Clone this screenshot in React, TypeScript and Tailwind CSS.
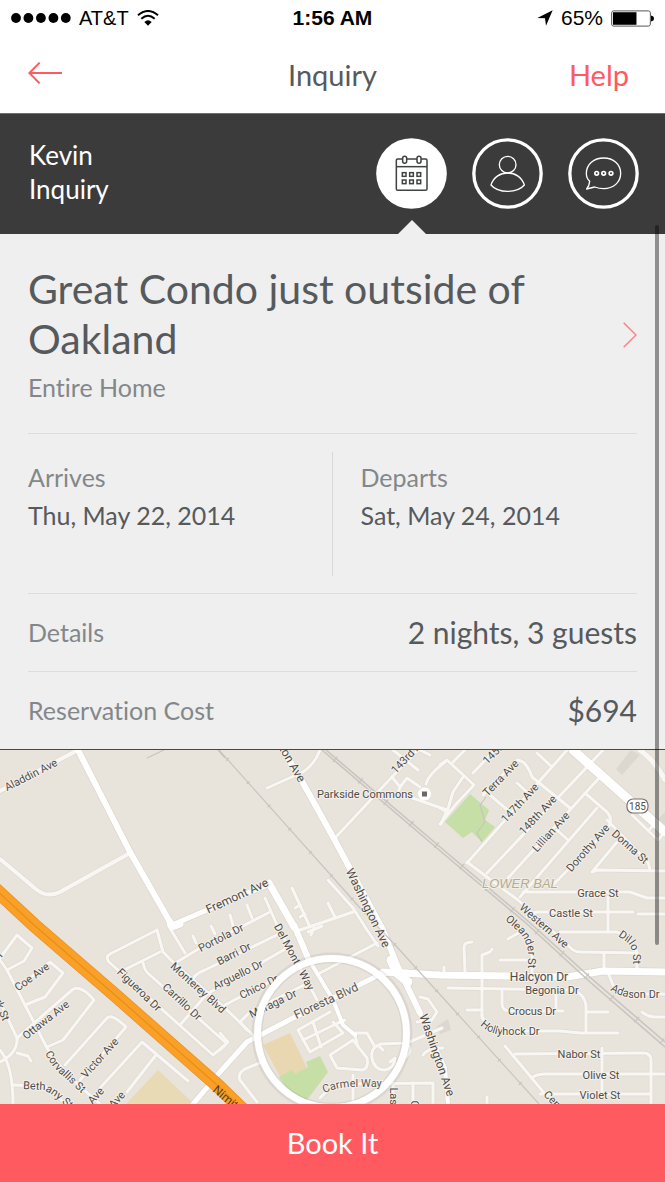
import React from "react";

type Street = { d: string; w?: number };

const streets: Street[] = [
  // north-west
  { d: "M0 791 L78 750", w: 4 },
  { d: "M0 859 L37 890 Q48 898 60 892 L130 853", w: 4 },
  // north centre
  { d: "M335 838 L392 777 L418 750" },
  { d: "M267 788 L303 772 Q315 764 320 750" },
  { d: "M392 777 L400 787 L407 778 L420 787" },
  { d: "M400 787 L398 793 L447 810 L441 824" },
  { d: "M426 784 Q428 775 445 762" },
  { d: "M393 750 L418 770" },
  { d: "M420 750 L430 755" },
  { d: "M440 765 L447 760 L474 785 L457 803 L440 824" },
  { d: "M463 777 L453 792 L447 812 L440 808" },
  { d: "M453 762 L465 750" },
  { d: "M473 773 L495 750" },
  { d: "M537 753 L552 767" },
  { d: "M467 863 L567 750" },
  { d: "M487 873 L603 750" },
  { d: "M483 795 L517 760 Q526 760 532 777 L570 808" },
  { d: "M490 795 L510 812" },
  { d: "M517 783 L527 792" },
  { d: "M508 878 L600 777" },
  { d: "M585 793 L607 812 Q614 820 607 830 L550 888" },
  { d: "M520 897 L597 808" },
  { d: "M557 830 L568 840" },
  { d: "M467 862 L518 900 L568 945 Q573 952 580 952 L637 953" },
  { d: "M523 892 L630 892 L647 898 L665 898" },
  { d: "M527 917 Q530 912 540 912 L633 912" },
  { d: "M638 914 L665 914" },
  { d: "M608 897 L608 932" },
  { d: "M560 932 L617 932 Q634 940 637 953 L637 968" },
  { d: "M604 953 L604 970" },
  { d: "M617 842 L592 872 L597 870 L665 871" },
  { d: "M607 820 L648 862 L650 870" },
  { d: "M640 750 Q656 762 665 780", w: 5 },
  { d: "M632 815 L658 840 L665 832" },
  { d: "M650 829 L656 822" },
  // east
  { d: "M444 967 L444 975" },
  { d: "M465 972 L464 947 Q464 942 472 942" },
  { d: "M482 1018 L482 955 L490 952 L492 949" },
  { d: "M500 960 L530 960" },
  { d: "M508 939 L520 932" },
  { d: "M532 950 L532 974" },
  { d: "M448 988 L573 990 Q584 994 586 1005 L586 1032" },
  { d: "M502 990 L502 1005 Q503 1011 510 1011 L563 1011" },
  { d: "M587 1012 L608 1012" },
  { d: "M467 1010 L482 1010" },
  { d: "M482 1015 Q486 1031 500 1031 L560 1031 L580 1033 L618 1033" },
  { d: "M556 992 L556 1010" },
  { d: "M505 1046 L540 1088 L553 1104" },
  { d: "M515 1054 L643 1053 Q651 1053 651 1060 L651 1104" },
  { d: "M533 1077 Q538 1074 545 1074 L665 1074" },
  { d: "M540 1094 L651 1094" },
  { d: "M602 1048 L602 1094" },
  { d: "M607 970 L613 985 Q617 993 627 994 L665 994" },
  { d: "M642 1012 Q648 1017 655 1017 L665 1017" },
  { d: "M487 1097 L487 1104" },
  // centre
  { d: "M177 962 L200 948 L270 912" },
  { d: "M190 985 Q193 974 205 970 L283 932" },
  { d: "M180 1025 L207 994 L287 948" },
  { d: "M225 1005 L240 997 L300 967" },
  { d: "M240 1022 L250 1012 L310 982" },
  { d: "M225 1008 L253 1035" },
  { d: "M240 1022 L247 1030" },
  { d: "M320 973 L377 943" },
  { d: "M328 880 L353 908 L367 930 L378 946" },
  { d: "M353 912 L300 930" },
  { d: "M328 903 L335 917" },
  { d: "M292 888 L310 927" },
  { d: "M295 908 L300 905 M300 917 L305 914" },
  { d: "M265 898 L277 925 L317 1000" },
  { d: "M247 905 L252 918" },
  { d: "M230 915 L234 929" },
  { d: "M308 932 L322 926 M311 935 L314 928" },
  { d: "M298 1030 L330 1012 M333 1022 L343 1033 L310 1052 L298 1030" },
  { d: "M313 1022 L321 1047" },
  { d: "M303 1040 L338 1023 L345 1020" },
  { d: "M330 1055 L353 1040 L367 1058 Q369 1069 362 1070 L337 1068 Z" },
  { d: "M355 1033 L367 1033 L375 1047" },
  { d: "M383 1050 L378 1045 Q370 1050 372 1058 Q374 1070 385 1070 Q395 1068 395 1058 L390 1062" },
  { d: "M355 1035 L358 1047" },
  { d: "M380 1044 L407 1043 L442 1028" },
  { d: "M407 1044 Q414 1050 405 1058" },
  { d: "M420 997 L428 999 L437 1012 L432 1020 L417 1022" },
  { d: "M423 1055 Q428 1047 443 1048" },
  { d: "M320 1098 Q330 1086 345 1084 L433 1083 L433 1104" },
  { d: "M393 1083 L393 1104" },
  { d: "M413 1083 L413 1104" },
  { d: "M353 1075 L353 1104" },
  { d: "M220 1033 L228 1042 L220 1050" },
  { d: "M262 1062 L245 1069 Q237 1074 240 1080 L257 1102" },
  // west
  { d: "M0 958 L17 935 L32 948 L24 961 L7 970" },
  { d: "M0 960 L7 970 L25 1005 L47 1048 Q60 1070 100 1104" },
  { d: "M20 986 L50 962 L63 973 L45 997 L25 1005" },
  { d: "M17 1038 L72 990 Q80 984 94 1000 L63 1040 L47 1047" },
  { d: "M65 1065 L107 1018 Q112 1013 126 1027 L80 1080" },
  { d: "M100 1088 L142 1042 L188 1081" },
  { d: "M127 1092 L156 1055" },
  { d: "M0 1002 L17 1038 Q18 1053 0 1062" },
  { d: "M17 1053 L28 1056 L31 1061" },
  { d: "M0 1050 Q13 1065 13 1104" },
  { d: "M13 1085 L45 1086 L66 1104" },
  { d: "M157 930 L110 954 Q105 957 109 962 L213 1055 L225 1045" },
  { d: "M157 930 L163 952 L173 962 L225 1008" },
  { d: "M120 972 L160 952" },
  { d: "M143 963 Q145 972 150 975 L225 1042" },
  { d: "M168 925 L185 953" },
  { d: "M193 936 L196 943 M211 926 L215 934" },
];

const avenues: Street[] = [
  { d: "M78 750 L130 852 L170 922", w: 6 },
  { d: "M172 925 L200 913 L270 884", w: 5 },
  { d: "M270 884 L295 928 L308 958 L333 1000 L343 1025 L355 1035", w: 4 },
  { d: "M269 883 L294 927", w: 7 },
  { d: "M294 925 L308 958", w: 6 },
  { d: "M283 750 L303 783 L333 837 L383 930 L397 965 L420 1013", w: 6 },
  { d: "M420 1013 L445 1068 L448 1104", w: 4 },
  { d: "M193 1104 L220 1072 L247 1042 L293 1018 L373 978 Q382 972 407 972", w: 5 },
  { d: "M383 972 L440 975 L567 977 L603 971 L665 972", w: 7 },
  { d: "M391 960 L397 973 L408 982", w: 9 },
  { d: "M573 750 L665 832", w: 9 },
  { d: "M170 922 L172 927 L180 924", w: 7 },
];

type LabelProps = { x: number; y: number; r?: number; size?: number; children: string };

function MapLabel({ x, y, r = 0, size = 11, children }: LabelProps) {
  return (
    <text
      x={x}
      y={y}
      fontSize={size}
      textAnchor="middle"
      dominantBaseline="central"
      transform={r ? `rotate(${r} ${x} ${y})` : undefined}
    >
      {children}
    </text>
  );
}

function CurvedLabel({ id, d, children }: { id: string; d: string; children: string }) {
  return (
    <>
      <path id={id} d={d} fill="none" stroke="none" />
      <text fontSize={11}>
        <textPath href={`#${id}`}>{children}</textPath>
      </text>
    </>
  );
}

function LocationMap() {
  return (
    <svg
      role="img"
      aria-label="Map of the listing's neighbourhood"
      viewBox="0 750 665 354"
      preserveAspectRatio="xMidYMid slice"
      className="block h-[354px] w-full bg-[#e8e4dc]"
    >
      <path d="M445 822 L470 794 L489 810 L485 820 L495 827 L482 842 L472 832 L463 838Z" fill="#c5dfa6" />
      <path d="M482 842 L477 833 L485 822 L480 805 L486 797" fill="none" stroke="#c9c5bd" strokeWidth="1.2" />
      <path d="M158 1070 L194 1104 L126 1104Z" fill="#e8dab5" />
      <path d="M263 1045 L290 1033 L308 1070 L295 1075 L280 1077Z" fill="#e8d7b1" />
      <path d="M279 1077 L292 1070 L295 1074 L308 1067 L306 1062 L320 1056 L328 1072 L307 1100 L293 1098Z" fill="#c5dfa6" />
      <path d="M616 769 L631 750 L640 755 L622 775Z M655 822 L665 812 V825Z M436 1027 L448 1019 L451 1030 L440 1034Z" fill="#dcd8d0" />

      <g fill="none" strokeLinecap="round" strokeLinejoin="round">
        {streets.map((s) => (
          <path key={`edge-${s.d}`} d={s.d} stroke="#dfdad2" strokeWidth={(s.w ?? 3) + 1.4} />
        ))}
        {avenues.map((s) => (
          <path key={`edge-${s.d}`} d={s.d} stroke="#dcd7ce" strokeWidth={(s.w ?? 5) + 1.4} />
        ))}
        {streets.map((s) => (
          <path key={s.d} d={s.d} stroke="#f9f7f3" strokeWidth={s.w ?? 3} />
        ))}
        {avenues.map((s) => (
          <path key={s.d} d={s.d} stroke="#ffffff" strokeWidth={s.w ?? 5} />
        ))}
      </g>

      {/* railways */}
      <g fill="none" stroke="#c8c5c0">
        <path d="M219 750 L337 882 L360 908 L397 947 L445 1000 L539 1104" strokeWidth="1.2" />
        <path d="M219 750 L337 882 L360 908 L397 947 L445 1000 L539 1104" strokeWidth="4" strokeDasharray="1.2 30" strokeDashoffset="-12" />
        <path d="M322 750 L445 855 L527 924 L590 982 L665 1047" strokeWidth="1.6" />
        <path d="M326 750 L446 852 L529 922 L592 979 L665 1042" strokeWidth="1.6" />
        <path d="M324 750 L446 853 L528 923 L591 980 L665 1044" strokeWidth="7" strokeDasharray="1.2 32" strokeDashoffset="-14" />
        <path d="M147 758 L164 750 M218 750 L225 758" strokeWidth="1.2" />
      </g>

      {/* freeway */}
      <path d="M-6 888 L34 925 L115 995 L217 1085 L242 1109" fill="none" stroke="#e8912a" strokeWidth="14" />
      <path d="M-6 888 L34 925 L115 995 L217 1085 L242 1109" fill="none" stroke="#fba026" strokeWidth="12.5" />
      <path d="M-6 888 L34 925 L115 995 L217 1085 L242 1109" fill="none" stroke="#e58f1b" strokeWidth="1.2" />

      <g
        fontFamily="Roboto, 'Liberation Sans', sans-serif"
        fill="#4f4c49"
        stroke="#f4f1eb"
        strokeWidth="2"
        strokeLinejoin="round"
        paintOrder="stroke"
      >
        <MapLabel x={31} y={775} r={-27}>Aladdin Ave</MapLabel>
        <MapLabel x={237} y={896} r={-25} size={12}>Fremont Ave</MapLabel>
        <MapLabel x={289} y={758} r={60} size={12}>ngton Ave</MapLabel>
        <MapLabel x={368} y={908} r={64} size={12}>Washington Ave</MapLabel>
        <MapLabel x={437} y={1055} r={71} size={12}>Washington Ave</MapLabel>
        <MapLabel x={365} y={794}>Parkside Commons</MapLabel>
        <MapLabel x={410} y={754} r={-47}>143rd Ave</MapLabel>
        <MapLabel x={502} y={745} r={-45}>145th Ave</MapLabel>
        <MapLabel x={501} y={778} r={-46}>Terra Ave</MapLabel>
        <MapLabel x={520} y={803} r={-47}>147th Ave</MapLabel>
        <MapLabel x={538} y={815} r={-47}>148th Ave</MapLabel>
        <MapLabel x={551} y={832} r={-48}>Lillian Ave</MapLabel>
        <MapLabel x={588} y={848} r={-49}>Dorothy Ave</MapLabel>
        <MapLabel x={630} y={847} r={42}>Donna St</MapLabel>
        <MapLabel x={598} y={893}>Grace St</MapLabel>
        <MapLabel x={571} y={913}>Castle St</MapLabel>
        <MapLabel x={544} y={926} r={41}>Western Ave</MapLabel>
        <CurvedLabel id="oleander" d="M505 920 L518 931 Q527 941 528 952 L528 975">Oleander St</CurvedLabel>
        <CurvedLabel id="dillo" d="M618 936 L628 943 Q633 949 633 958 L633 975">Dillo St</CurvedLabel>
        <MapLabel x={539} y={977} size={12}>Halcyon Dr</MapLabel>
        <MapLabel x={552} y={990}>Begonia Dr</MapLabel>
        <MapLabel x={532} y={1011}>Crocus Dr</MapLabel>
        <CurvedLabel id="hollyhock" d="M480 1025 Q489 1034 503 1035 L560 1035">Hollyhock Dr</CurvedLabel>
        <CurvedLabel id="adason" d="M610 990 Q621 997 633 998 L680 998">Adason Dr</CurvedLabel>
        <MapLabel x={579} y={1054}>Nabor St</MapLabel>
        <MapLabel x={601} y={1075}>Olive St</MapLabel>
        <MapLabel x={600} y={1095}>Violet St</MapLabel>
        <CurvedLabel id="central" d="M543 1095 L590 1145">Central Ave</CurvedLabel>
        <MapLabel x={221} y={938} r={-27}>Portola Dr</MapLabel>
        <MapLabel x={234} y={954} r={-27}>Barri Dr</MapLabel>
        <MapLabel x={238} y={975} r={-26}>Arguello Dr</MapLabel>
        <MapLabel x={259} y={987} r={-26}>Chico Dr</MapLabel>
        <MapLabel x={273} y={1004} r={-26}>Moraga Dr</MapLabel>
        <MapLabel x={294} y={957} r={62}>Del Monte Way</MapLabel>
        <MapLabel x={198} y={988} r={42}>Monterey Blvd</MapLabel>
        <MapLabel x={182} y={1002} r={43}>Carrillo Dr</MapLabel>
        <MapLabel x={139} y={990} r={44}>Figueroa Dr</MapLabel>
        <MapLabel x={32} y={977} r={-36}>Coe Ave</MapLabel>
        <MapLabel x={46} y={1020} r={-38}>Ottawa Ave</MapLabel>
        <MapLabel x={100} y={1058} r={-48}>Victor Ave</MapLabel>
        <MapLabel x={93} y={1099} r={-48}>n Ave</MapLabel>
        <MapLabel x={114} y={1103} r={-48}>d Ave</MapLabel>
        <MapLabel x={2} y={1010} r={68}>rk St</MapLabel>
        <MapLabel x={0} y={954} r={-50}>r</MapLabel>
        <CurvedLabel id="corvallis" d="M45 1053 Q52 1068 63 1076 L95 1106">Corvallis St</CurvedLabel>
        <CurvedLabel id="bethany" d="M23 1089 L43 1090 Q54 1094 72 1112">Bethany St</CurvedLabel>
        <MapLabel x={393} y={1116} r={90}>Las Palmas</MapLabel>
        <MapLabel x={414} y={1107} r={90}>Ca</MapLabel>
      </g>

      {/* approximate location */}
      <circle cx="332" cy="1033" r="75" fill="none" stroke="#000" strokeOpacity="0.06" strokeWidth="11" />
      <circle cx="332" cy="1033" r="74.5" fill="none" stroke="#fff" strokeWidth="7" />

      <g fontFamily="Roboto, sans-serif" fill="#5c5956" stroke="#f4f1eb" strokeWidth="2" paintOrder="stroke">
        <MapLabel x={326} y={1001} r={-25} size={12}>Floresta Blvd</MapLabel>
        <CurvedLabel id="carmel" d="M324 1093 Q338 1087 353 1087 L390 1087">Carmel Way</CurvedLabel>
      </g>
      <text x="212" y="1091" fontSize="12" fontFamily="Roboto, sans-serif" fill="#5d3d17" transform="rotate(40 212 1091)">
        Nimitz Fwy
      </text>
      <text
        x="482"
        y="888"
        fontSize="13"
        fontStyle="italic"
        fontWeight="500"
        fontFamily="'Liberation Sans', sans-serif"
        fill="#b5ab93"
        stroke="#f1eee6"
        strokeWidth="2"
        paintOrder="stroke"
      >
        LOWER BAL
      </text>
      <circle cx="424.500" cy="794" r="6.500" fill="#fff" />
      <rect x="422" y="791.500" width="5" height="5" fill="#6b6866" />
      <rect x="627" y="799" width="21" height="14" rx="6" fill="#fff" stroke="#77736f" strokeWidth="1.2" />
      <text x="637.500" y="810" fontSize="10" textAnchor="middle" fontFamily="Roboto, sans-serif" fill="#4f4c49">
        185
      </text>
    </svg>
  );
}

function StatusBar() {
  return (
    <div className="grid h-9 grid-cols-3 items-center bg-white px-[11px] font-['Liberation_Sans',sans-serif] text-xl leading-6 text-black">
      <div className="flex items-center gap-2">
        <svg viewBox="0 0 60 10" className="h-[10px] w-[60px]" aria-hidden="true">
          {[5, 17.4, 29.9, 42.4, 54.8].map((cx) => (
            <circle key={cx} cx={cx} cy="5" r="4.900" />
          ))}
        </svg>
        <span>AT&amp;T</span>
        <svg viewBox="0 0 66 48" className="h-4 w-[22px]" aria-hidden="true" fill="none" stroke="#000" strokeWidth="6">
          <path d="M3 16 Q33 -10 63 16" />
          <path d="M13 26 Q33 9 53 26" />
          <path d="M22 36 Q33 26 44 36 L33 47Z" fill="#000" stroke="none" />
        </svg>
      </div>
      <div className="text-center text-[21px] font-bold">1:56 AM</div>
      <div className="flex items-center justify-end gap-2">
        <svg viewBox="0 0 48 48" className="size-4" aria-hidden="true">
          <path d="M47 1 L1 24 L24 25 L27 47Z" />
        </svg>
        <span className="text-[21px]">65%</span>
        <svg viewBox="0 0 130 50" className="h-[17px] w-[43px]" aria-hidden="true">
          <rect x="2" y="2" width="117" height="46" rx="6" fill="none" stroke="#555" strokeWidth="3" />
          <rect x="6" y="6" width="71" height="38" fill="#000" />
          <path d="M121 16 Q130 18 130 25 Q130 32 121 34Z" fill="#000" />
        </svg>
      </div>
    </div>
  );
}

const ring = <circle cx="106.500" cy="106.500" r="101" fill="none" stroke="#fff" strokeWidth="10" />;

function HostBar() {
  return (
    <section className="flex items-center justify-between border-t border-[#6d716f] bg-[#3b3b3b] pl-[29px] pr-[26px] pt-6 pb-[25px]">
      <p className="pb-[3px] text-[26px] leading-[34px] text-white">
        Kevin
        <br />
        Inquiry
      </p>
      <nav className="flex gap-[25px]" aria-label="Inquiry sections">
        <button type="button" aria-label="Dates" className="relative size-[71px]">
          <svg viewBox="0 0 213 213" className="size-full" fill="none" stroke="#3f4142" strokeWidth="4.500">
            <circle cx="106.500" cy="106.500" r="106" fill="#fff" stroke="none" />
            <rect x="61" y="63" width="92" height="94" rx="4" />
            <path d="M61 86 H153" />
            <rect x="80" y="55" width="12" height="21" rx="6" fill="#fff" />
            <rect x="123" y="55" width="12" height="21" rx="6" fill="#fff" />
            {[79, 101, 123].map((x) => (
              <g key={x}>
                <rect x={x} y="104" width="11" height="11" />
                <rect x={x} y="126" width="11" height="11" />
              </g>
            ))}
          </svg>
          <svg viewBox="0 0 30 15" className="absolute left-1/2 top-[82px] h-[15px] w-[30px] -translate-x-1/2" aria-hidden="true">
            <path d="M15 0 L30 15 H0Z" fill="#efefef" />
          </svg>
        </button>
        <button type="button" aria-label="Guest" className="size-[71px]">
          <svg viewBox="0 0 213 213" className="size-full" fill="none" stroke="#fff" strokeWidth="4">
            {ring}
            <circle cx="107" cy="80" r="25" />
            <path d="M57 141 C64 118 84 105 107 105 C130 105 150 118 157 141 C147 153 128 160 107 160 C86 160 67 153 57 141Z" />
          </svg>
        </button>
        <button type="button" aria-label="Messages" className="size-[71px]">
          <svg viewBox="0 0 213 213" className="size-full" fill="none" stroke="#fff" strokeWidth="4" strokeLinejoin="round">
            {ring}
            <path d="M65 130 C58 124 55 116 55 106 C55 79 78 60 107 60 C136 60 158 79 158 106 C158 133 136 152 107 152 C97 152 88 150 80 147 L56 153 Q64 143 65 130 Z" />
            <circle cx="86" cy="106" r="5.500" strokeWidth="5" />
            <circle cx="107" cy="106" r="5.500" strokeWidth="5" />
            <circle cx="129" cy="106" r="5.500" strokeWidth="5" />
          </svg>
        </button>
      </nav>
    </section>
  );
}

export default function App() {
  return (
    <div className="relative flex min-h-screen flex-col bg-[#efefef] font-[Lato,'Liberation_Sans',sans-serif] text-[#565a5c] [font-variant-ligatures:none]">
      <StatusBar />
      <header className="grid h-[77px] grid-cols-3 items-center bg-white px-7">
        <button type="button" aria-label="Back" className="mb-1 justify-self-start">
          <svg viewBox="0 0 102 66" className="h-[22px] w-[34px]" fill="none" stroke="#ff5a5f" strokeWidth="6">
            <path d="M102 33 H4 M35 2 L4 33 L35 64" />
          </svg>
        </button>
        <h1 className="text-center text-[29px] leading-8">Inquiry</h1>
        <a href="#help" className="justify-self-end pr-2 text-[29px] leading-8 text-[#ff5a5f]">
          Help
        </a>
      </header>
      <HostBar />

      <main className="flex flex-col">
        <div className="px-7">
          <a href="#listing" className="flex items-center justify-between border-b border-[#dcdddd] pt-[30px] pb-7">
            <div>
              <h2 className="max-w-[530px] text-[41px] leading-[50px]">Great Condo just outside of Oakland</h2>
              <p className="mt-[5px] text-[25px] leading-9 text-[#82888a]">Entire Home</p>
            </div>
            <svg viewBox="0 0 42 78" className="h-[26px] w-[14px]" fill="none" stroke="#ff7b7f" strokeWidth="4" aria-hidden="true">
              <path d="M2 2 L39 39 L2 76" />
            </svg>
          </a>
          <dl>
            <div className="grid grid-cols-2 border-b border-[#dcdddd] pt-[18px] pb-[17px]">
              <div className="h-[124px] border-r border-[#d6d7d7] pt-[7px]">
                <dt className="text-[25px] leading-9 text-[#82888a]">Arrives</dt>
                <dd className="text-[25px] leading-10">Thu, May 22, 2014</dd>
              </div>
              <div className="pl-7 pt-[7px]">
                <dt className="text-[25px] leading-9 text-[#82888a]">Departs</dt>
                <dd className="text-[25px] leading-10">Sat, May 24, 2014</dd>
              </div>
            </div>
            <div className="flex h-[78px] items-center justify-between border-b border-[#dcdddd]">
              <dt className="text-[25px] text-[#82888a]">Details</dt>
              <dd className="text-[30px]">2 nights, 3 guests</dd>
            </div>
            <div className="flex h-[77px] items-center justify-between">
              <dt className="text-[25px] text-[#82888a]">Reservation Cost</dt>
              <dd className="text-[30px]">$694</dd>
            </div>
          </dl>
        </div>
        <div className="border-t border-[#4a4745]">
          <LocationMap />
        </div>
      </main>

      <button type="button" className="h-[78px] w-full bg-[#ff5a5f] text-[29px] text-white">
        Book It
      </button>

      <div className="absolute right-[6px] top-[225px] h-[720px] w-1 rounded-full bg-black/40" aria-hidden="true" />
    </div>
  );
}
